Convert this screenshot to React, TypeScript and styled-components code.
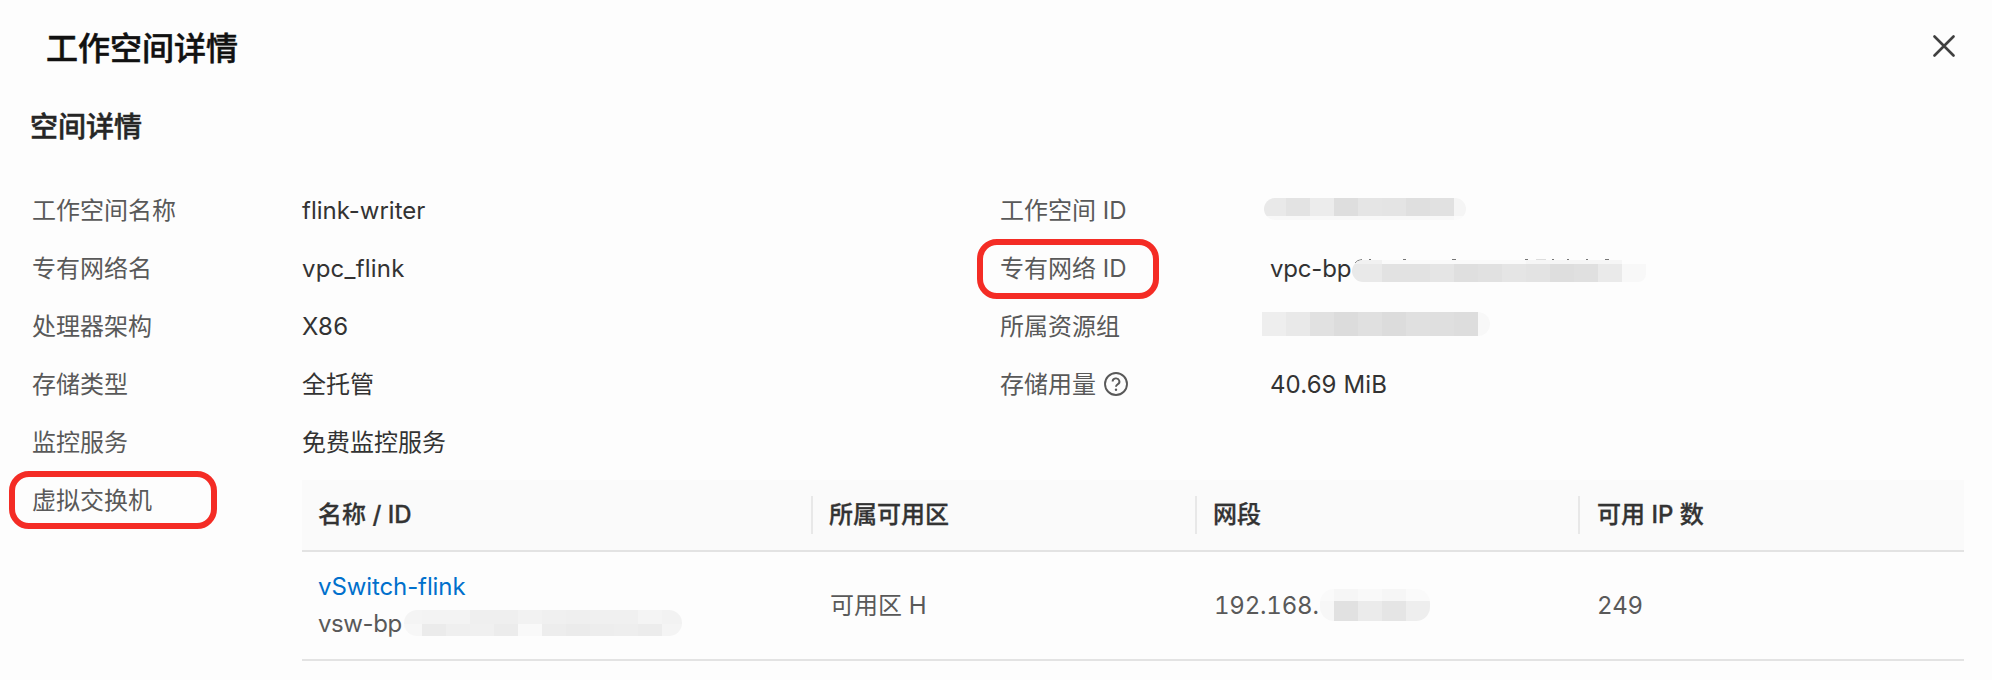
import React from "react";
import styled, { createGlobalStyle } from "styled-components";


const GlobalStyle = createGlobalStyle`
  * {
    box-sizing: border-box;
  }

  body {
    margin: 0;
    background-color: #fdfdfd;
    font-family: Inter, "Noto Sans CJK SC", sans-serif;
    font-size: 24px;
    color: #333333;
  }
`;

const Panel = styled.div`
  width: 1992px;
  height: 680px;
  padding: 0 28px 0 30px;
  background-color: #fdfdfd;
`;

const PanelHeader = styled.header`
  height: 98px;
  padding: 0 9px 0 16px;
  display: flex;
  justify-content: space-between;
  align-items: center;
`;

const PanelTitle = styled.h1`
  margin: 0;
  font-size: 32px;
  font-weight: 500;
  line-height: 48px;
  color: #111111;
  -webkit-text-stroke: 0.5px #111111;
`;

const CloseButton = styled.button`
  width: 22px;
  height: 22px;
  padding: 0;
  margin-top: -6px;
  border: 0;
  background: none;
  color: #404040;
  cursor: pointer;

  svg {
    display: block;
  }
`;

const SectionTitle = styled.h2`
  height: 58px;
  margin: 0 0 26px;
  font-size: 28px;
  font-weight: 500;
  line-height: 58px;
  color: #262626;
  -webkit-text-stroke: 0.5px #262626;
`;

const DetailRow = styled.div`
  display: flex;
  height: 58px;
  padding-left: 2px;
  line-height: 58px;
`;

const Label = styled.div`
  position: relative;
  flex: 0 0 270px;
  display: flex;
  align-items: center;
  color: #595959;
  white-space: pre;
`;

const Value = styled.div`
  flex: 0 0 698px;
  display: flex;
  align-items: center;
`;

const Latin = styled.span<{ $spacing?: number; $width?: number; $tabular?: boolean }>`
  flex: none;
  width: ${(props) => (props.$width ? `${props.$width}px` : "auto")};
  font-variant-numeric: ${(props) => (props.$tabular ? "tabular-nums" : "normal")};
  letter-spacing: ${(props) => props.$spacing ?? 0}px;
  white-space: nowrap;
`;

const HelpIcon = styled.svg`
  margin-left: 8px;
  margin-top: -2px;
`;

const Highlight = styled.span<{ $left: number; $top: number; $width: number; $height: number }>`
  position: absolute;
  left: ${(props) => props.$left}px;
  top: ${(props) => props.$top}px;
  width: ${(props) => props.$width}px;
  height: ${(props) => props.$height}px;
  border: 6px solid #f42c25;
  border-radius: 20px;
`;

const MaskBox = styled.span<{ $radius: string; $margin: string }>`
  position: relative;
  flex: none;
  display: block;
  overflow: hidden;
  border-radius: ${(props) => props.$radius};
  margin: ${(props) => props.$margin};
`;

const MaskLine = styled.span<{ $height: number }>`
  display: flex;
  height: ${(props) => props.$height}px;
`;

const MaskCell = styled.span<{ $width: number; $color: string }>`
  flex: none;
  width: ${(props) => props.$width}px;
  background-color: ${(props) => props.$color};
`;

const Clipped = styled.span`
  position: relative;
  display: flex;
  align-items: center;

  > svg {
    position: absolute;
    left: 84px;
    top: 18px;
  }
`;

const Table = styled.div`
  width: 1662px;
  height: 181px;
  margin-top: 8px;
`;

const TableHead = styled.div`
  display: grid;
  grid-template-columns: 511px 384px 383px 384px;
  align-items: center;
  height: 72px;
  border-bottom: 2px solid #e3e3e3;
  background-color: #fafafa;
`;

const HeadCell = styled.div`
  height: 38px;
  padding-left: 16px;
  line-height: 38px;
  font-weight: 500;
  color: #333333;
  -webkit-text-stroke: 0.3px #333333;

  &:not(:last-child) {
    border-right: 2px solid #e8e8e8;
  }

  &:last-child {
    padding-left: 17px;
  }
`;

const TableRow = styled.div`
  display: grid;
  grid-template-columns: 511px 384px 383px 384px;
  align-items: center;
  height: 109px;
  border-bottom: 2px solid #e3e3e3;
`;

const Cell = styled.div`
  padding-left: 17px;
  line-height: 37px;
  color: #595959;

  &:first-child {
    padding: 0 0 2px 16px;
  }
`;

const CellLine = styled.div`
  display: flex;
  align-items: center;
  height: 37px;
`;

const SwitchLink = styled.a`
  color: #0070cc;
  text-decoration: none;
  cursor: pointer;
`;

type MaskProps = {
  lines: { height: number; cells: [number, string][] }[];
  radius: string;
  margin?: string;
};

const Mask = ({ lines, radius, margin = "0" }: MaskProps) => (
  <MaskBox $radius={radius} $margin={margin}>
    {lines.map((line, i) => (
      <MaskLine key={i} $height={line.height}>
        {line.cells.map(([width, color], j) => (
          <MaskCell key={j} $width={width} $color={color} />
        ))}
      </MaskLine>
    ))}
  </MaskBox>
);

const workspaceMask: MaskProps["lines"] = [
  {
    height: 18,
    cells: [
      [22, "#e9e9e9"], [24, "#e3e3e3"], [24, "#ececec"], [24, "#dedede"], [24, "#e5e5e5"],
      [24, "#e4e4e4"], [24, "#dfdfdf"], [24, "#e1e1e1"], [12, "#f5f5f5"],
    ],
  },
  { height: 4, cells: [[190, "#f8f8f8"], [12, "#fbfbfb"]] },
];

const vpcMask: MaskProps["lines"] = [
  { height: 4, cells: [[30, "#f1f1f1"], [144, "#fafafa"], [96, "#f6f6f6"], [24, "#fdfdfd"]] },
  {
    height: 18,
    cells: [
      [30, "#e9e9e9"], [24, "#e2e2e2"], [24, "#e2e2e2"], [24, "#e5e5e5"], [24, "#dfdfdf"], [24, "#e1e1e1"],
      [24, "#e5e5e5"], [24, "#e3e3e3"], [24, "#dedede"], [24, "#e0e0e0"], [24, "#eaeaea"], [24, "#f8f8f8"],
    ],
  },
];

const groupMask: MaskProps["lines"] = [
  {
    height: 24,
    cells: [
      [24, "#eeeeee"], [24, "#e9e9e9"], [24, "#e1e1e1"], [24, "#dcdcdc"], [24, "#e0e0e0"],
      [24, "#dcdcdc"], [24, "#e0e0e0"], [24, "#dfdfdf"], [24, "#dddddd"], [12, "#f8f8f8"],
    ],
  },
];

const switchMask: MaskProps["lines"] = [
  {
    height: 14,
    cells: [
      [18, "#f4f4f4"], [48, "#f3f3f3"], [48, "#efefef"], [24, "#f2f2f2"],
      [24, "#f0f0f0"], [24, "#efefef"], [48, "#f0f0f0"], [24, "#f4f4f4"], [20, "#f2f2f2"],
    ],
  },
  {
    height: 12,
    cells: [
      [18, "#f7f7f7"], [24, "#ebebeb"], [24, "#efefef"], [24, "#f0f0f0"], [24, "#ececec"], [24, "#f9f9f9"],
      [24, "#ededed"], [24, "#ebebeb"], [24, "#ededed"], [24, "#eeeeee"], [24, "#ececec"], [20, "#f4f4f4"],
    ],
  },
];

const cidrMask: MaskProps["lines"] = [
  { height: 12, cells: [[14, "#fafafa"], [24, "#f6f6f6"], [24, "#f9f9f9"], [24, "#f6f6f6"], [24, "#fafafa"]] },
  { height: 20, cells: [[14, "#f7f7f7"], [24, "#e1e1e1"], [24, "#ebebeb"], [24, "#e5e5e5"], [24, "#eeeeee"]] },
];

const App = () => {
  return (
    <>
      <GlobalStyle />
      <Panel>
        <PanelHeader>
          <PanelTitle>工作空间详情</PanelTitle>
          <CloseButton aria-label="close">
            <svg width="22" height="22" viewBox="0 0 22 22" fill="none" stroke="currentColor" strokeWidth="2.6" strokeLinecap="round">
              <path d="M1.5 1.5l19 19M20.5 1.5l-19 19" />
            </svg>
          </CloseButton>
        </PanelHeader>
        <SectionTitle>空间详情</SectionTitle>

        <DetailRow>
          <Label>工作空间名称</Label>
          <Value><Latin>flink-writer</Latin></Value>
          <Label>工作空间 ID</Label>
          <Value>
            <Mask lines={workspaceMask} radius="11px" margin="-4px 0 0 -6px" />
          </Value>
        </DetailRow>
        <DetailRow>
          <Label>专有网络名</Label>
          <Value><Latin $spacing={0.2}>vpc_flink</Latin></Value>
          <Label>
            专有网络 ID
            <Highlight $left={-23} $top={-1} $width={182} $height={60} />
          </Label>
          <Value>
            <Clipped>
              <Latin $spacing={-0.2} $width={82}>vpc-bp</Latin>
              <svg width="270" height="12" viewBox="0 0 270 12" fill="none" stroke="#777777">
                <path d="M1 5q2-3 7-3.500" />
                <path d="M15 1.500h2M49 1.500h3M98 1.500h4M171 1.500h3M198 1.500h2M213 1.500h2M232 1.500h2M251 1.500h4" />
                <path d="M182 1.500h10" stroke="#dddddd" />
              </svg>
            </Clipped>
            <Mask lines={vpcMask} radius="11px 0 8px 11px" margin="4px 0 0 0" />
          </Value>
        </DetailRow>
        <DetailRow>
          <Label>处理器架构</Label>
          <Value><Latin $spacing={0.2}>X86</Latin></Value>
          <Label>所属资源组</Label>
          <Value>
            <Mask lines={groupMask} radius="0 12px 12px 0" margin="-6px 0 0 -8px" />
          </Value>
        </DetailRow>
        <DetailRow>
          <Label>存储类型</Label>
          <Value>全托管</Value>
          <Label>
            存储用量
            <HelpIcon width="24" height="24" viewBox="0 0 24 24" fill="none" stroke="#595959" strokeWidth="1.9">
              <circle cx="12" cy="12" r="11" />
              <path d="M8.600 9.600a3.400 3.200 0 1 1 5 2.800c-1.200.700-1.600 1.200-1.600 2.300" />
              <circle cx="12" cy="17.700" r="1.200" fill="#595959" stroke="none" />
            </HelpIcon>
          </Label>
          <Value><Latin $spacing={0.1}>40.69 MiB</Latin></Value>
        </DetailRow>
        <DetailRow>
          <Label>监控服务</Label>
          <Value>免费监控服务</Value>
        </DetailRow>
        <DetailRow>
          <Label>
            虚拟交换机
            <Highlight $left={-23} $top={-1} $width={208} $height={58} />
          </Label>
          <Table>
            <TableHead>
              <HeadCell>名称 / ID</HeadCell>
              <HeadCell>所属可用区</HeadCell>
              <HeadCell>网段</HeadCell>
              <HeadCell>可用 IP 数</HeadCell>
            </TableHead>
            <TableRow>
              <Cell>
                <CellLine>
                  <SwitchLink><Latin $spacing={-0.1}>vSwitch-flink</Latin></SwitchLink>
                </CellLine>
                <CellLine>
                  <Latin $spacing={-0.4} $width={83}>vsw-bp</Latin>
                  <Mask lines={switchMask} radius="13px" margin="0 0 0 3px" />
                </CellLine>
              </Cell>
              <Cell>可用区 H</Cell>
              <Cell>
                <CellLine>
                  <Latin $tabular $spacing={-0.2} $width={104}>192.168.</Latin>
                  <Mask lines={cidrMask} radius="14px" margin="-2px 0 0 2px" />
                </CellLine>
              </Cell>
              <Cell><Latin $tabular $spacing={-0.3}>249</Latin></Cell>
            </TableRow>
          </Table>
        </DetailRow>
      </Panel>
    </>
  );
};

export default App;
